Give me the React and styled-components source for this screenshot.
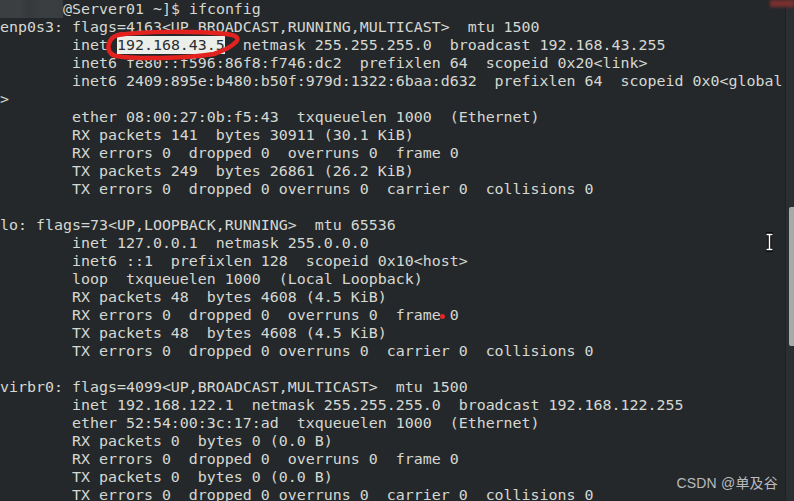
import React from "react";
import styled, { createGlobalStyle } from "styled-components";

const Global = createGlobalStyle`
  html, body { margin: 0; padding: 0; background: #25282b; }
  body { width: 794px; height: 501px; overflow: hidden; }
`;

const Window = styled.div`
  position: relative;
  width: 794px;
  height: 501px;
  display: flex;
  background: #25282b;
  overflow: hidden;
`;

const Pane = styled.div`
  flex: 1;
  min-width: 0;
  font-family: "DejaVu Sans Mono", monospace;
  font-size: 14.95px;
  color: #d5d8d2;
  overflow: hidden;
`;

const Line = styled.div`
  height: 18px;
  line-height: 18px;
  white-space: pre;
`;

const Redacted = styled.span`
  display: inline-block;
  width: 63px;
  height: 18px;
  vertical-align: top;
  background: linear-gradient(90deg, #3b3e41 0%, #3d4043 30%, #36393c 45%, #3b3e41 70%, #3a3d40 100%);
  filter: blur(0.6px);
`;

const Selected = styled.span`
  background: #eceeea;
  color: #2a2d30;
`;

const ScrollTrack = styled.div`
  width: 8px;
  background: #2b2e31;
  border-left: 1px solid #1f2224;
  display: flex;
  flex-direction: column;
  padding-top: 207px;
`;

const Thumb = styled.div`
  margin-left: 3px;
  width: 5px;
  height: 139px;
  background: #a9a9a9;
  border-radius: 2px 0 0 2px;
`;

const Overlay = styled.svg`
  position: absolute;
  pointer-events: none;
`;

const RedCorner = styled.div`
  position: absolute;
  right: 0;
  top: 0;
  width: 24px;
  height: 7px;
  background: #7a2f2f;
  filter: blur(1.5px);
`;

const Watermark = styled.div`
  position: absolute;
  right: 16px;
  bottom: 9px;
  font-family: "Liberation Sans", "Noto Sans CJK SC", sans-serif;
  font-size: 14px;
  color: #b8bbbd;
  letter-spacing: 0.2px;
`;

const RedDot = styled.div`
  position: absolute;
  left: 440px;
  top: 314px;
  width: 5px;
  height: 5px;
  border-radius: 50%;
  background: #e0282a;
`;

const I = "        ";

export default function App() {
  return (
    <>
      <Global />
      <Window>
        <Pane>
          <Line><Redacted />@Server01 ~]$ ifconfig</Line>
          <Line>{"enp0s3: flags=4163<UP,BROADCAST,RUNNING,MULTICAST>  mtu 1500"}</Line>
          <Line>{I + "inet "}<Selected>192.168.43.5</Selected>{"  netmask 255.255.255.0  broadcast 192.168.43.255"}</Line>
          <Line>{I + "inet6 fe80::f596:86f8:f746:dc2  prefixlen 64  scopeid 0x20<link>"}</Line>
          <Line>{I + "inet6 2409:895e:b480:b50f:979d:1322:6baa:d632  prefixlen 64  scopeid 0x0<global"}</Line>
          <Line>{">"}</Line>
          <Line>{I + "ether 08:00:27:0b:f5:43  txqueuelen 1000  (Ethernet)"}</Line>
          <Line>{I + "RX packets 141  bytes 30911 (30.1 KiB)"}</Line>
          <Line>{I + "RX errors 0  dropped 0  overruns 0  frame 0"}</Line>
          <Line>{I + "TX packets 249  bytes 26861 (26.2 KiB)"}</Line>
          <Line>{I + "TX errors 0  dropped 0 overruns 0  carrier 0  collisions 0"}</Line>
          <Line>{" "}</Line>
          <Line>{"lo: flags=73<UP,LOOPBACK,RUNNING>  mtu 65536"}</Line>
          <Line>{I + "inet 127.0.0.1  netmask 255.0.0.0"}</Line>
          <Line>{I + "inet6 ::1  prefixlen 128  scopeid 0x10<host>"}</Line>
          <Line>{I + "loop  txqueuelen 1000  (Local Loopback)"}</Line>
          <Line>{I + "RX packets 48  bytes 4608 (4.5 KiB)"}</Line>
          <Line>{I + "RX errors 0  dropped 0  overruns 0  frame 0"}</Line>
          <Line>{I + "TX packets 48  bytes 4608 (4.5 KiB)"}</Line>
          <Line>{I + "TX errors 0  dropped 0 overruns 0  carrier 0  collisions 0"}</Line>
          <Line>{" "}</Line>
          <Line>{"virbr0: flags=4099<UP,BROADCAST,MULTICAST>  mtu 1500"}</Line>
          <Line>{I + "inet 192.168.122.1  netmask 255.255.255.0  broadcast 192.168.122.255"}</Line>
          <Line>{I + "ether 52:54:00:3c:17:ad  txqueuelen 1000  (Ethernet)"}</Line>
          <Line>{I + "RX packets 0  bytes 0 (0.0 B)"}</Line>
          <Line>{I + "RX errors 0  dropped 0  overruns 0  frame 0"}</Line>
          <Line>{I + "TX packets 0  bytes 0 (0.0 B)"}</Line>
          <Line>{I + "TX errors 0  dropped 0 overruns 0  carrier 0  collisions 0"}</Line>
        </Pane>
        <ScrollTrack>
          <Thumb />
        </ScrollTrack>

        <RedCorner />
        <Overlay style={{ left: 104, top: 29 }} width="138" height="32" viewBox="0 0 138 32">
          <path
            d="M14 6 C40 2, 90 2, 122 5 C132 6, 136 9, 132 13 C128 17, 122 21, 110 25 C80 30, 30 30, 12 27 C4 25, 3 18, 6 12 C8 8, 12 6, 18 5"
            fill="none"
            stroke="#e3211f"
            strokeWidth="4.5"
            strokeLinecap="round"
          />
        </Overlay>
        <RedDot />
        <Overlay style={{ left: 764, top: 232 }} width="11" height="20" viewBox="0 0 11 20">
          <path
            d="M2 2 H9 M5.5 2 V18 M2 18 H9"
            fill="none"
            stroke="#000"
            strokeWidth="3.5"
          />
          <path
            d="M2.5 2.5 H8.5 M5.5 2.5 V17.5 M2.5 17.5 H8.5"
            fill="none"
            stroke="#fff"
            strokeWidth="1.5"
          />
        </Overlay>
        <Watermark>CSDN @单及谷</Watermark>
      </Window>
    </>
  );
}
